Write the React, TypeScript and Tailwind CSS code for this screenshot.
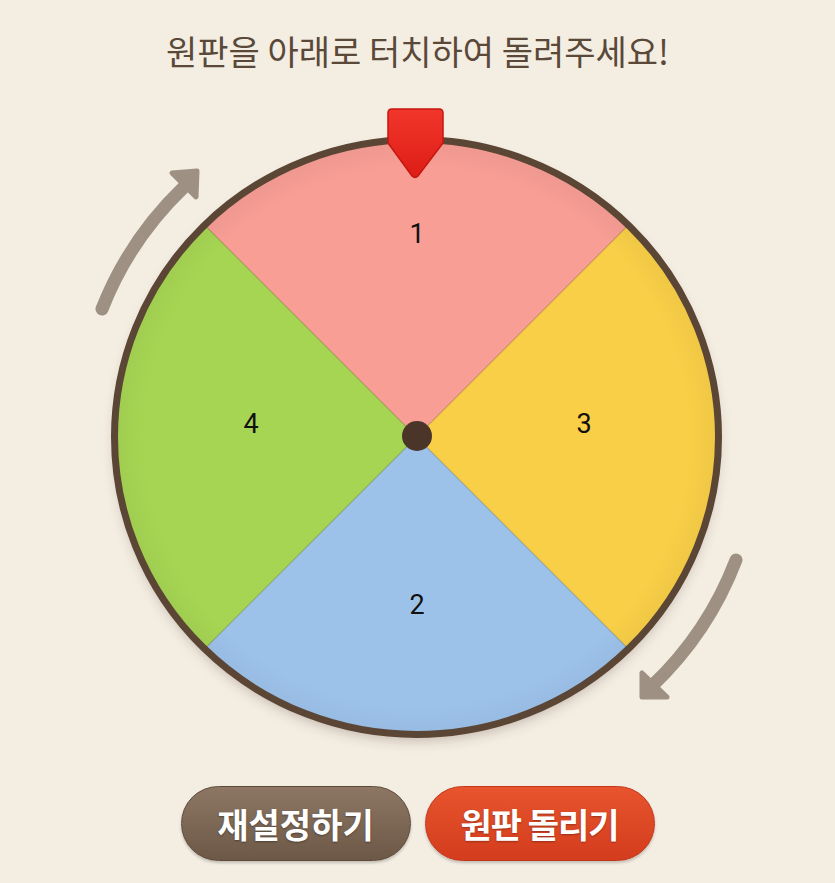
import React from "react";

// wheel centre on the page (svg viewBox uses page coords)
const CX = 416.5;
const CY = 437;

const segments = [
    { label: "1", color: "#f89e95", pts: `${CX},${CY} ${CX - 420},${CY - 420} ${CX + 420},${CY - 420}`, tx: 417, ty: 234 },
    { label: "3", color: "#f9cf47", pts: `${CX},${CY} ${CX + 420},${CY - 420} ${CX + 420},${CY + 420}`, tx: 584, ty: 424 },
    { label: "2", color: "#9dc2ea", pts: `${CX},${CY} ${CX + 420},${CY + 420} ${CX - 420},${CY + 420}`, tx: 417, ty: 605 },
    { label: "4", color: "#a6d553", pts: `${CX},${CY} ${CX - 420},${CY + 420} ${CX - 420},${CY - 420}`, tx: 251, ty: 424 },
];

const Wheel = () => (
    <svg width="835" height="710" viewBox="0 70 835 710" className="block">
        <defs>
            <clipPath id="wheelClip">
                <ellipse cx={CX} cy={CY} rx="302" ry="297.5" />
            </clipPath>
            <filter id="wheelShadow" x="-10%" y="-10%" width="120%" height="125%">
                <feDropShadow dx="0" dy="7" stdDeviation="6" floodColor="#5b4535" floodOpacity="0.28" />
            </filter>
            <linearGradient id="pointerGrad" x1="0" y1="0" x2="0" y2="1">
                <stop offset="0" stopColor="#f2362c" />
                <stop offset="1" stopColor="#dd1d16" />
            </linearGradient>
            <radialGradient id="shade" cx="0.5" cy="0.5" r="0.5">
                <stop offset="0.9" stopColor="#000" stopOpacity="0" />
                <stop offset="1" stopColor="#000" stopOpacity="0.04" />
            </radialGradient>
        </defs>

        {/* rotation arrows */}
        <g fill="none" stroke="#9e9183" strokeWidth="13" strokeLinecap="round">
            <path d="M 102 309 A 342 342 0 0 1 184 187" />
            <path d="M 736 560 A 342 342 0 0 1 652 686" />
        </g>
        <g fill="#9e9183" stroke="#9e9183" strokeWidth="5" strokeLinejoin="round">
            <polygon points="172,173 197,171 196,197" />
            <polygon points="642,673 642,697 667,697" />
        </g>

        {/* wheel */}
        <g filter="url(#wheelShadow)">
            <ellipse cx={CX} cy={CY} rx="302" ry="297.5" fill="#5b4535" />
        </g>
        <g clipPath="url(#wheelClip)">
            {segments.map((s) => (
                <polygon key={s.label} points={s.pts} fill={s.color} />
            ))}
            <g stroke="#000" strokeOpacity="0.07" strokeWidth="1.5">
                <line x1={CX - 420} y1={CY - 420} x2={CX + 420} y2={CY + 420} />
                <line x1={CX + 420} y1={CY - 420} x2={CX - 420} y2={CY + 420} />
            </g>
            <ellipse cx={CX} cy={CY} rx="302" ry="297.5" fill="url(#shade)" />
        </g>
        <ellipse cx={CX} cy={CY} rx="302" ry="297.5" fill="none" stroke="#5b4535" strokeWidth="7" />

        {segments.map((s) => (
            <text
                key={s.label}
                x={s.tx}
                y={s.ty}
                textAnchor="middle"
                dominantBaseline="central"
                fontSize="27"
                fill="#111"
                fontFamily="Roboto, 'Noto Sans', sans-serif"
            >
                {s.label}
            </text>
        ))}

        <circle cx="417" cy="436" r="15" fill="#4a3528" />

        {/* pointer */}
        <path
            d="M 392 109 H 439 Q 443 109 443 113 V 143 L 418 176 Q 415 179 412 176 L 388 143 V 113 Q 388 109 392 109 Z"
            fill="url(#pointerGrad)"
            stroke="#c5170f"
            strokeWidth="1.5"
        />
    </svg>
);

export default function App() {
    return (
        <div
            className="min-h-screen w-[835px] bg-[#f3ede2] flex flex-col items-center"
            style={{ fontFamily: "'Noto Sans CJK KR', 'Noto Sans', sans-serif" }}
        >
            <h1 className="pt-[32px] text-[34px] leading-[38px] font-normal text-[#5a4838] whitespace-nowrap">
                원판을 아래로 터치하여 돌려주세요!
            </h1>

            <Wheel />

            <div className="mt-[6px] flex gap-[14px]">
                <button className="w-[230px] h-[75px] rounded-full bg-gradient-to-b from-[#8d7764] to-[#6d5847] border border-[#5e4a3a] text-white text-[34px] font-bold [text-shadow:0_1px_2px_rgba(0,0,0,0.35)] shadow-[0_2px_3px_rgba(0,0,0,0.2)]">
                    재설정하기
                </button>
                <button className="w-[230px] h-[75px] rounded-full bg-gradient-to-b from-[#e7542d] to-[#d33c1d] border border-[#c3361a] text-white text-[34px] font-bold tracking-[-1px] [text-shadow:0_1px_2px_rgba(0,0,0,0.3)] shadow-[0_2px_3px_rgba(0,0,0,0.2)]">
                    원판 돌리기
                </button>
            </div>
        </div>
    );
}
